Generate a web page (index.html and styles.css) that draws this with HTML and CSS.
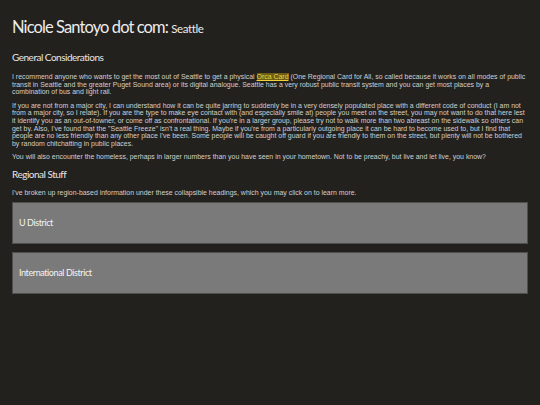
FILE: index.html
```html
<!DOCTYPE html>
<html>
    <head>
        <link rel="stylesheet" href="styles.css">
    </head>
 <body>
    <div class="page">
        <h1 class="title">Nicole Santoyo dot com: <small>Seattle</small></h1>
        <h2 class="section">General Considerations</h2>
        <p>I recommend anyone who wants to get the most out of Seattle to get a physical <a href="#">Orca Card</a> (One Regional Card for All, so called because it works on all modes of public transit in Seattle and the greater Puget Sound area) or its digital analogue. Seattle has a very robust public transit system and you can get most places by a combination of bus and light rail.</p>
        <p>If you are not from a major city, I can understand how it can be quite jarring to suddenly be in a very densely populated place with a different code of conduct (I am not from a major city, so I relate). If you are the type to make eye contact with (and especially smile at) people you meet on the street, you may not want to do that here lest it identify you as an out-of-towner, or come off as confrontational. If you're in a larger group, please try not to walk more than two abreast on the sidewalk so others can get by. Also, I've found that the "Seattle Freeze" isn't a real thing. Maybe if you're from a particularly outgoing place it can be hard to become used to, but I find that people are no less friendly than any other place I've been. Some people will be caught off guard if you are friendly to them on the street, but plenty will not be bothered by random chitchatting in public places.</p>
        <p>You will also encounter the homeless, perhaps in larger numbers than you have seen in your hometown. Not to be preachy, but live and let live, you know?</p>
        <h2 class="section second">Regional Stuff</h2>
        <p class="intro">I've broken up region-based information under these collapsible headings, which you may click on to learn more.</p>
        <button class="region">U District</button>
        <button class="region">International District</button>
    </div>
 </body>
</html>
```

FILE: styles.css
```css
body{
    margin: 0;
    background-color: #23211e;
    color: #d0d0d0;
    font-family: "Liberation Sans", Arial, sans-serif;
}
.page{
    padding: 17px 12px;
}
.title{
    font-family: Lato, sans-serif;
    font-weight: normal;
    font-size: 16.5px;
    line-height: 20px;
    letter-spacing: -0.9px;
    color: #ececec;
    margin: 0;
}
.title small{
    font-size: 11.5px;
    letter-spacing: -0.4px;
}
.section{
    font-family: Lato, sans-serif;
    font-weight: normal;
    font-size: 10px;
    line-height: 12px;
    letter-spacing: -0.5px;
    color: #e6e6e6;
    margin: 12px 0 10px 0;
}
.second{
    margin: 7px 0 9px 0;
}
p{
    font-size: 6.95px;
    line-height: 7.6px;
    margin: 0 0 6px 0;
}
.intro{
    margin-bottom: 5px;
}
a{
    color: #f2d23a;
    background-color: #6e5d14;
}
.region{
    display: block;
    width: 100%;
    height: 42px;
    margin-bottom: 8px;
    padding: 0 6px;
    text-align: left;
    font-family: Lato, sans-serif;
    font-size: 9px;
    letter-spacing: -0.4px;
    color: #f4f4f4;
    background-color: #7a7a7a;
    border: 1px solid #4e4e4e;
    cursor: pointer;
}
```
